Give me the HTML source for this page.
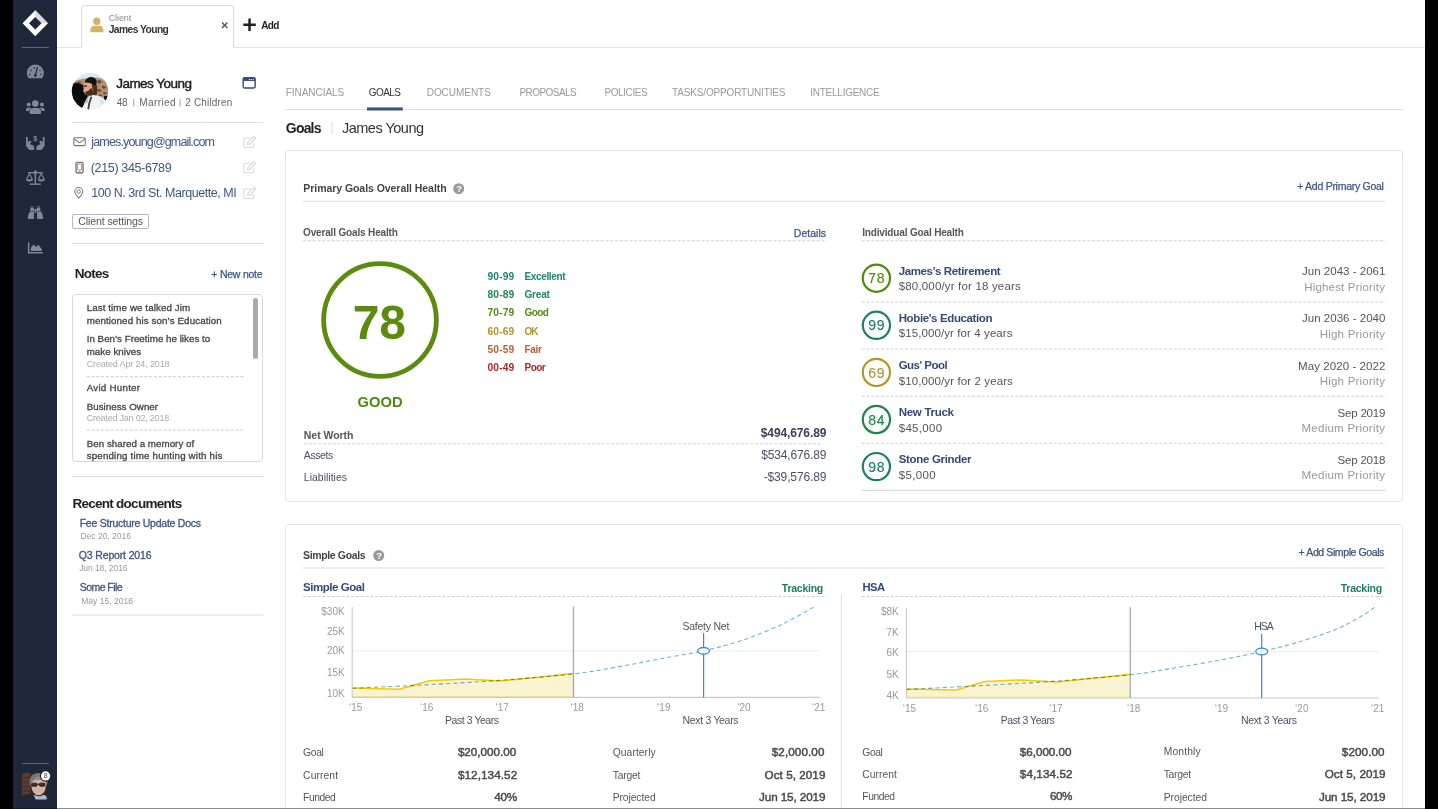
<!DOCTYPE html>
<html lang="en"><head><meta charset="utf-8"><title>Goals - James Young</title>
<style>
html,body{margin:0;padding:0;background:#fff;}
body{width:1438px;height:809px;overflow:hidden;font-family:"Liberation Sans",sans-serif;}
#app{position:relative;width:1438px;height:809px;overflow:hidden;background:#fff;}
.t{position:absolute;white-space:nowrap;line-height:1;font-family:"Liberation Sans",sans-serif;}
.b{position:absolute;box-sizing:border-box;}
svg{position:absolute;overflow:visible;}
svg text{font-family:"Liberation Sans",sans-serif;}

</style></head>
<body>
<div id="app">
<div class="b" style="left:0;top:0;width:13px;height:809px;background:#000"></div>
<div class="b" style="left:1425px;top:0;width:13px;height:809px;background:#000"></div>
<div class="b" style="left:13px;top:0;width:44px;height:809px;background:#1f283a"></div>
<div class="b" style="left:57px;top:47px;width:1368px;height:1px;background:#e3e3e3"></div>
<div class="b" style="left:81px;top:5px;width:153px;height:43px;background:#fff;border:1px solid #dcdcdc;border-bottom:none;border-radius:4px 4px 0 0"></div>
<div class="b" style="left:285px;top:150px;width:1118px;height:352px;border:1px solid #e4e4e4;border-radius:3px"></div>
<div class="b" style="left:285px;top:524px;width:1118px;height:300px;border:1px solid #e4e4e4;border-radius:3px"></div>
<div class="b" style="left:72px;top:294px;width:191px;height:168px;border:1px solid #dadada;border-radius:4px"></div>
<div class="b" style="left:253.3px;top:298.3px;width:4.5px;height:61px;background:#aaa;border-radius:2.5px"></div>
<div class="b" style="left:72px;top:213.5px;width:77px;height:15px;border:1px solid #b3b7cb;border-radius:2px"></div>
<svg width="1438" height="809" viewBox="0 0 1438 809" style="left:0;top:0">
<path d="M35.25 10.25 L47.95 23.25 L35.25 36.25 L22.55 23.25 Z" fill="#fff"/>
<path d="M35.25 10.25 L47.95 23.25 L41.55 23.25 L35.25 16.85 Z" fill="#d9dbe0"/>
<path d="M35.25 16.95 L41.5 23.25 L35.25 29.55 L29.0 23.25 Z" fill="#1f283a"/>
<rect x="22" y="47" width="27" height="1" fill="#5d6576"/>
<rect x="22" y="763" width="27" height="1" fill="#5d6576"/>
<path d="M28.400 78.200 A8.600 8.600 0 1 1 42.200 78.200 Z" fill="#7f8797"/>
<path d="M35.3 75.6 L37.3 67.6" stroke="#1f283a" stroke-width="1.3" stroke-linecap="round"/>
<circle cx="29.6" cy="74.6" r="0.75" fill="#1f283a"/>
<circle cx="30.9" cy="70.4" r="0.75" fill="#1f283a"/>
<circle cx="34.3" cy="67.9" r="0.75" fill="#1f283a"/>
<circle cx="40.0" cy="70.4" r="0.75" fill="#1f283a"/>
<circle cx="41.0" cy="74.6" r="0.75" fill="#1f283a"/>
<circle cx="35.3" cy="75.4" r="1.3" fill="#1f283a"/>
<circle cx="35.3" cy="103.6" r="3.3" fill="#7f8797"/>
<path d="M29.400 112.600 q0 -4.600 3.900 -4.600 h4 q3.900 0 3.900 4.600 q0 1.300 -1.300 1.300 h-9.200 q-1.300 0 -1.300 -1.300 z" fill="#7f8797"/>
<circle cx="28.7" cy="104.6" r="2" fill="#7f8797"/><circle cx="41.9" cy="104.6" r="2" fill="#7f8797"/>
<path d="M25.9 111 v-1 a2.3 2.3 0 0 1 2.3 -2.3 h1.8 a3 3 0 0 1 1.1 0.3 a5 5 0 0 0 -2.2 3 z" fill="#7f8797"/>
<path d="M44.7 111 v-1 a2.3 2.3 0 0 0 -2.3 -2.3 h-1.8 a3 3 0 0 0 -1.1 0.3 a5 5 0 0 1 2.2 3 z" fill="#7f8797"/>
<path d="M26 137.6 q0 -0.9 0.9 -0.9 q0.9 0 0.9 0.9 v4.6 l1.6 -1.2 q0.9 -0.6 1.6 0.1 q0.6 0.8 0 1.5 l-1.2 1.5 l3.3 1.3 q1 0.5 1 1.6 v2.9 h-4.9 l-2.6 -3.2 q-0.6 -0.8 -0.6 -1.8 z" fill="#7f8797"/>
<path d="M44.6 137.6 q0 -0.9 -0.9 -0.9 q-0.9 0 -0.9 0.9 v4.6 l-1.6 -1.2 q-0.9 -0.6 -1.6 0.1 q-0.6 0.8 0 1.5 l1.2 1.5 l-3.3 1.3 q-1 0.5 -1 1.6 v2.9 h4.9 l2.6 -3.2 q0.6 -0.8 0.6 -1.8 z" fill="#7f8797"/>
<rect x="34.6" y="170.8" width="1.5" height="13" fill="#7f8797"/>
<rect x="28" y="172" width="14.8" height="1.4" fill="#7f8797"/>
<rect x="29.8" y="183.5" width="11" height="1.4" fill="#7f8797"/>
<circle cx="35.35" cy="171.9" r="1.4" fill="#7f8797"/>
<path d="M29.4 173.6 L26.4 179.4 M29.4 173.6 L32.4 179.4" stroke="#7f8797" stroke-width="1.1" fill="none"/>
<path d="M25.9 179.2 h7 a3.5 2.2 0 0 1 -7 0 z" fill="#7f8797"/>
<path d="M41.3 173.6 L38.3 179.4 M41.3 173.6 L44.3 179.4" stroke="#7f8797" stroke-width="1.1" fill="none"/>
<path d="M37.8 179.2 h7 a3.5 2.2 0 0 1 -7 0 z" fill="#7f8797"/>
<path d="M30.3 208 h3.6 v3 h-3.6 z M36.7 208 h3.6 v3 h-3.6 z" fill="#7f8797"/>
<path d="M30.6 206.4 h3 v1.2 h-3 z M37 206.4 h3 v1.2 h-3 z" fill="#7f8797"/>
<path d="M30.1 211.4 h3.9 v6.6 q0 0.9 -0.9 0.9 h-4.5 q-0.9 0 -0.9 -0.9 q0.3 -4.2 2.3 -6.6 z" fill="#7f8797"/>
<path d="M40.9 211.4 h-3.9 v6.6 q0 0.9 0.9 0.9 h4.5 q0.9 0 0.9 -0.9 q-0.3 -4.2 -2.3 -6.6 z" fill="#7f8797"/>
<rect x="34.4" y="209" width="2.2" height="3.6" fill="#7f8797"/>
<path d="M28.6 242.6 v10.2 h14.3" stroke="#7f8797" stroke-width="1.5" fill="none"/>
<path d="M30.8 251 v-3.2 l2.7 -3.4 l2.6 2.6 l2.3 -2.2 l3.4 4.4 v1.8 z" fill="#7f8797"/>
<defs><clipPath id="cav2"><rect x="22" y="773" width="26.3" height="26.6" rx="2.5"/></clipPath><clipPath id="cav1"><circle cx="90" cy="91.3" r="18.2"/></clipPath></defs>
<g clip-path="url(#cav2)">
<rect x="22" y="773" width="27" height="27" fill="#33241f"/>
<rect x="22" y="773" width="8.500" height="23" fill="#5a3a2f"/>
<path d="M22 777.500 h8.500 M22 782 h8.500 M22 786.500 h8.500 M22 791 h8.500" stroke="#3c2620" stroke-width="0.700"/>
<path d="M29.500 783 q0 -10 9 -10 q9 0 9 10 l-1 3 h-16 z" fill="#77777a"/>
<ellipse cx="38.600" cy="786" rx="7.200" ry="9.300" fill="#d3b3a2"/>
<path d="M31.200 782 q2 -5 7.500 -5 q5.500 0 7.500 5 q-3 -2.500 -7.500 -2.300 q-4.500 0 -7.500 2.300 z" fill="#8b8a8c"/>
<rect x="31.600" y="783.200" width="5.400" height="3" rx="0.900" fill="#3a3030" stroke="#141010" stroke-width="0.800"/>
<rect x="39.400" y="783.200" width="5.400" height="3" rx="0.900" fill="#3a3030" stroke="#141010" stroke-width="0.800"/>
<path d="M37 784.200 h2.400" stroke="#141010" stroke-width="0.800"/>
<path d="M22 795.500 q6 -2.500 11 -1.500 l3.500 6 h-14.500 z" fill="#26262b"/>
<path d="M33.500 794.500 q5 3.500 10 0.300 l3.500 1.500 l1.500 4 h-12.500 z" fill="#a9bdd2"/>
<path d="M46 794 l3 1 v5 h-2 z" fill="#26262b"/>
</g>
<circle cx="45.6" cy="775.9" r="5.7" fill="#1f283a"/><circle cx="45.6" cy="775.9" r="4.6" fill="#fff"/>
<circle cx="96.8" cy="21.2" r="3.7" fill="#d5b26c"/>
<path d="M90.3 32.2 v-2.2 a4.3 4.3 0 0 1 4.3 -4.3 h4.5 a4.3 4.3 0 0 1 4.3 4.3 v2.2 z" fill="#d5b26c"/>
<path d="M222 22.6 l5.4 5.4 M227.4 22.6 l-5.4 5.4" stroke="#555" stroke-width="1.4" fill="none"/>
<path d="M243.300 24.700 h12.500 M249.550 18.450 v12.500" stroke="#222" stroke-width="2.500" fill="none"/>
<g clip-path="url(#cav1)">
<rect x="71" y="72" width="38" height="38" fill="#d6e9f4"/>
<path d="M72 84 q3 -4 8 -4.500 q5 -1.500 9 -0.500 q6 -2.500 12 -0.500 q5 1.500 7 6 q2 5 0 12 l-3 5 h-14 l-12 -10 z" fill="#b39173"/>
<path d="M97 80.500 q3 -1 5 1 q-1 2.500 -4 2 z M102 86 q3 -1 4.500 1.500 q-2 2 -4.500 0.500 z M98 89 q3 0 4 2 q-3 1.500 -5 0 z M103.500 92 q2.500 -0.500 3.500 1.500 q-2 1.500 -4 0.300 z M99.500 94 q2 0 3 1.500 q-2 1 -3.500 0 z M76 82.500 q3 -1.500 6 -0.500 q-2 2 -6 1.500 z M94 81 q1.500 -0.500 2.500 0.500 q-1 1 -2.500 0.500z" fill="#6a4b37"/>
<path d="M104 96 q3 -1 4.500 1 v4 q-3 0 -4.500 -2 z" fill="#16120f"/>
<path d="M70 84 q7 -2.500 13.500 1 l0.800 5 q0.500 4 3.500 6 q-2 5 -4.500 10 l-3 4 h-10.500 z" fill="#0b0b0b"/>
<path d="M90 83 q5 -1 7 3 q1 6 -1 10.500 l-5.500 1 z" fill="#4b3020"/>
<path d="M83.200 85 q0.500 -2 3 -2.200 l5.500 0.500 l1 7 l-2 4 l-4.500 0.800 q-1.500 -0.500 -1.800 -2.500 l-1.500 -1.600 l0.800 -1.500 z" fill="#dba988"/>
<path d="M83.400 85.300 h3.400 v1.600 h-3.200 z" fill="#7a2f1f"/>
<path d="M85.500 91.500 q2.500 0.500 4.500 -2.500 l1.500 -1 l1.500 4.500 q-1.500 3 -5.500 3.400 q-1.800 -0.400 -2.200 -2 z" fill="#4a2c1c"/>
<path d="M84.800 82.600 q0.500 -4.500 5.500 -5.500 q5 -0.300 6.300 4 q0.300 2.500 -0.600 4.300 l-3.500 -1.500 q-3.500 -1.500 -7.700 -1.300 z" fill="#121212"/>
<path d="M83 110 q0.500 -9 6 -13.500 l4 -1.500 q8 0.500 12 5 q3 4 3.500 10 z" fill="#eef3f6"/>
<path d="M90.500 96.500 q-2.500 6 -3.300 13.500 h1.800 q0.800 -7 3.300 -13 z" fill="#4a3d33"/>
<path d="M99 98 q5 1.500 8.500 12 h-6 q-0.500 -7 -2.500 -12 z" fill="#cfe2ef"/>
<path d="M84.500 104 q1.500 -5 4.500 -7.500 l-1.500 6 z" fill="#c9b9a6"/>
</g>
<rect x="243.15" y="77.650" width="12" height="10.400" rx="1.6" fill="none" stroke="#334a7c" stroke-width="1.400"/>
<rect x="243.15" y="77.650" width="12" height="3.300" fill="#334a7c"/>
<circle cx="249.400" cy="79.300" r="0.600" fill="#fff"/><circle cx="251.300" cy="79.300" r="0.600" fill="#fff"/><circle cx="253.200" cy="79.300" r="0.600" fill="#fff"/>
<rect x="133.300" y="99" width="1" height="7.600" fill="#a4a4a4"/><rect x="179.600" y="99" width="1" height="7.600" fill="#a4a4a4"/>
<rect x="72" y="122.0" width="191" height="1" fill="#dedede"/>
<rect x="72" y="243.0" width="191" height="1" fill="#dedede"/>
<rect x="72" y="476.0" width="191" height="1" fill="#dedede"/>
<rect x="72" y="614.5" width="191" height="1" fill="#dedede"/>
<rect x="73.850" y="137.750" width="11.400" height="7.900" rx="1.2" fill="none" stroke="#7a7a7a" stroke-width="1.1"/>
<path d="M74.200 139 l4.600 3.400 q0.750 0.500 1.500 0 l4.600 -3.400" fill="none" stroke="#7a7a7a" stroke-width="1.1"/>
<rect x="76" y="162.400" width="7.100" height="10.600" rx="1.500" fill="none" stroke="#7a7a7a" stroke-width="1.400"/>
<rect x="77.700" y="164" width="3.700" height="5.800" fill="none" stroke="#7a7a7a" stroke-width="0.7"/>
<rect x="78.400" y="171.100" width="2.300" height="0.9" fill="#7a7a7a"/>
<path d="M78.750 198.200 q-4 -4.700 -4 -6.600 a4 4 0 0 1 8 0 q0 1.900 -4 6.600 z" fill="none" stroke="#7a7a7a" stroke-width="1.050" stroke-linejoin="round"/>
<circle cx="78.750" cy="191.600" r="1.700" fill="none" stroke="#7a7a7a" stroke-width="1"/>
<path d="M250.5 138.0 h-5.300 a1.400 1.400 0 0 0 -1.400 1.400 v6.700 a1.400 1.400 0 0 0 1.400 1.400 h7.200 a1.400 1.400 0 0 0 1.400 -1.400 v-3.200" fill="none" stroke="#dadada" stroke-width="1.100"/>
<path d="M247.5 144.5 l0.500 -2.400 l5.700 -5.700 l1.900 1.900 l-5.700 5.700 z" fill="none" stroke="#dadada" stroke-width="1.250" stroke-linejoin="round"/>
<path d="M250.5 163.3 h-5.300 a1.400 1.400 0 0 0 -1.400 1.400 v6.700 a1.400 1.400 0 0 0 1.400 1.400 h7.200 a1.400 1.400 0 0 0 1.400 -1.400 v-3.200" fill="none" stroke="#dadada" stroke-width="1.100"/>
<path d="M247.5 169.8 l0.500 -2.400 l5.700 -5.700 l1.900 1.900 l-5.700 5.700 z" fill="none" stroke="#dadada" stroke-width="1.250" stroke-linejoin="round"/>
<path d="M250.5 189.0 h-5.300 a1.400 1.400 0 0 0 -1.400 1.400 v6.700 a1.400 1.400 0 0 0 1.400 1.400 h7.200 a1.400 1.400 0 0 0 1.400 -1.400 v-3.200" fill="none" stroke="#dadada" stroke-width="1.100"/>
<path d="M247.5 195.5 l0.500 -2.400 l5.700 -5.700 l1.900 1.900 l-5.700 5.700 z" fill="none" stroke="#dadada" stroke-width="1.250" stroke-linejoin="round"/>
<path d="M86.700 376.7 H244.200" stroke="#c9c9c9" stroke-width="1" stroke-dasharray="3 1.800"/>
<path d="M86.700 430 H244.200" stroke="#c9c9c9" stroke-width="1" stroke-dasharray="3 1.800"/>
<rect x="285.500" y="109" width="1117.500" height="1" fill="#dedede"/>
<rect x="367" y="107.400" width="35.800" height="3.100" fill="#3b5186"/>
<rect x="331.600" y="121.700" width="1" height="12.500" fill="#dcdcdc"/>
<circle cx="458.7" cy="188.7" r="5.500" fill="#9a9a9a"/>
<circle cx="378.7" cy="555.5" r="5.500" fill="#9a9a9a"/>
<path d="M303 201.200 H1385" stroke="#dcdcdc" stroke-width="1.100"/>
<path d="M303 240.800 H826.700 M861.700 240.800 H1385.600" stroke="#cfcfcf" stroke-width="1" stroke-dasharray="3 1.800"/>
<circle cx="380" cy="320" r="56.350" fill="none" stroke="#5b8c0f" stroke-width="4.800"/>
<path d="M303.800 443.800 H820.800" stroke="#cfcfcf" stroke-width="1" stroke-dasharray="3 1.800"/>
<circle cx="876.400" cy="278.20" r="13.600" fill="none" stroke="#4c8b0b" stroke-width="2.200"/>
<path d="M861.700 302.00 H1385.600" stroke="#cfcfcf" stroke-width="1" stroke-dasharray="3 1.800"/>
<circle cx="876.400" cy="325.30" r="13.600" fill="none" stroke="#1a7f6b" stroke-width="2.200"/>
<path d="M861.700 349.10 H1385.600" stroke="#cfcfcf" stroke-width="1" stroke-dasharray="3 1.800"/>
<circle cx="876.400" cy="372.40" r="13.600" fill="none" stroke="#b1962a" stroke-width="2.200"/>
<path d="M861.700 396.20 H1385.600" stroke="#cfcfcf" stroke-width="1" stroke-dasharray="3 1.800"/>
<circle cx="876.400" cy="419.50" r="13.600" fill="none" stroke="#1c8749" stroke-width="2.200"/>
<path d="M861.700 443.30 H1385.600" stroke="#cfcfcf" stroke-width="1" stroke-dasharray="3 1.800"/>
<circle cx="876.400" cy="466.60" r="13.600" fill="none" stroke="#1a7f6b" stroke-width="2.200"/>
<path d="M861.700 490.400 H1385.600" stroke="#dcdcdc" stroke-width="1.100"/>
<path d="M303 568 H1385" stroke="#dcdcdc" stroke-width="1.100"/>
<path d="M303 596.500 H827.200 M862 596.500 H1385" stroke="#cfcfcf" stroke-width="1" stroke-dasharray="3 1.800"/>
<path d="M841.400 594 V809" stroke="#dedede" stroke-width="1"/>
<path d="M352.2 650.8 H819.7" stroke="#ececec" stroke-width="1"/>
<path d="M352.50 688.00 L399.30 689.20 L429.50 680.70 L465.50 679.10 L500.50 681.00 L573.50 673.50 L573.5 697.4 L352.5 697.4 Z" fill="#f9f3cf"/>
<path d="M352.5 696.5 H573.5" stroke="#f4e89a" stroke-width="1"/>
<path d="M352.50 688.00 L399.30 689.20 L429.50 680.70 L465.50 679.10 L500.50 681.00 L573.50 673.50" fill="none" stroke="#f3c90a" stroke-width="1.500" stroke-linejoin="round"/>
<path d="M352.2 607 V697.4 H819.7" fill="none" stroke="#c9c9c9" stroke-width="1.100"/>
<path d="M573.5 606.5 V697.4" stroke="#aaaaaa" stroke-width="1.300"/>
<path d="M352.50 688.30 C365.42 687.68 405.42 685.93 430.00 684.60 C454.58 683.27 476.08 682.08 500.00 680.30 C523.92 678.52 553.42 676.22 573.50 673.90 C593.58 671.58 605.95 668.93 620.50 666.40 C635.05 663.87 646.95 661.32 660.80 658.70 C674.65 656.08 690.15 653.72 703.60 650.70 C717.05 647.68 728.47 644.98 741.50 640.60 C754.53 636.22 769.53 630.12 781.80 624.40 C794.07 618.68 809.55 609.32 815.10 606.30" fill="none" stroke="#6db3e0" stroke-width="1.100" stroke-dasharray="4.200 3" style="mix-blend-mode:multiply"/>
<path d="M703.6 633.1 V697.4" stroke="#2e8fd6" stroke-width="1.200"/>
<ellipse cx="703.6" cy="650.8" rx="5.900" ry="3.300" fill="#fff" fill-opacity="0.85" stroke="#2e8fd6" stroke-width="1.300"/>
<path d="M906.5 651.5 H1379.2" stroke="#ececec" stroke-width="1"/>
<path d="M906.80 689.00 L955.90 690.00 L985.10 681.50 L1021.40 679.90 L1057.70 681.90 L1130.30 674.30 L1130.3 698 L906.8 698 Z" fill="#f9f3cf"/>
<path d="M906.8 697.1 H1130.3" stroke="#f4e89a" stroke-width="1"/>
<path d="M906.80 689.00 L955.90 690.00 L985.10 681.50 L1021.40 679.90 L1057.70 681.90 L1130.30 674.30" fill="none" stroke="#f3c90a" stroke-width="1.500" stroke-linejoin="round"/>
<path d="M906.5 607.7 V698 H1379.2" fill="none" stroke="#c9c9c9" stroke-width="1.100"/>
<path d="M1130.3 607.2 V698" stroke="#aaaaaa" stroke-width="1.300"/>
<path d="M906.80 689.40 C919.83 688.73 959.97 686.80 985.00 685.40 C1010.03 684.00 1032.78 682.77 1057.00 681.00 C1081.22 679.23 1111.43 676.85 1130.30 674.80 C1149.17 672.75 1155.18 671.17 1170.20 668.70 C1185.22 666.23 1205.15 662.87 1220.40 660.00 C1235.65 657.13 1249.17 654.35 1261.70 651.50 C1274.23 648.65 1283.68 646.42 1295.60 642.90 C1307.52 639.38 1322.33 634.78 1333.20 630.40 C1344.07 626.02 1353.82 620.50 1360.80 616.60 C1367.78 612.70 1372.72 608.60 1375.10 607.00" fill="none" stroke="#6db3e0" stroke-width="1.100" stroke-dasharray="4.200 3" style="mix-blend-mode:multiply"/>
<path d="M1261.7 634.1 V698" stroke="#2e8fd6" stroke-width="1.200"/>
<ellipse cx="1261.7" cy="651.5" rx="5.900" ry="3.300" fill="#fff" fill-opacity="0.85" stroke="#2e8fd6" stroke-width="1.300"/>
<rect x="57" y="808" width="1368" height="1" fill="#8c8c8c"/>
<rect x="13" y="808" width="44" height="1" fill="#141a27"/>
</svg>
<div class="t" style="left:108.70px;top:14.20px;font-size:9px;color:#8c8c8c;letter-spacing:-0.102px;">Client</div>
<div class="t" style="left:108.70px;top:24.80px;font-size:10.25px;color:#333;font-weight:700;letter-spacing:-0.552px;">James Young</div>
<div class="t" style="left:261.20px;top:20.70px;font-size:10px;color:#222;font-weight:700;letter-spacing:-0.665px;">Add</div>
<div class="t" style="left:116.20px;top:76.80px;font-size:13.5px;color:#222;letter-spacing:-0.530px;-webkit-text-stroke:0.45px #222;">James Young</div>
<div class="t" style="left:116.70px;top:98.00px;font-size:10px;color:#666;letter-spacing:-0.262px;">48</div>
<div class="t" style="left:139.20px;top:98.00px;font-size:10px;color:#666;letter-spacing:0.411px;">Married</div>
<div class="t" style="left:185.30px;top:98.00px;font-size:10px;color:#666;letter-spacing:0.153px;">2 Children</div>
<div class="t" style="left:91.30px;top:136.20px;font-size:12.5px;color:#3d5584;letter-spacing:-0.845px;">james.young@gmail.com</div>
<div class="t" style="left:90.80px;top:161.70px;font-size:12.5px;color:#3d5584;letter-spacing:-0.356px;">(215) 345-6789</div>
<div class="t" style="left:91.20px;top:187.20px;font-size:12.5px;color:#3d5584;letter-spacing:-0.453px;">100 N. 3rd St. Marquette, MI</div>
<div class="t" style="left:78.30px;top:215.50px;font-size:10.5px;color:#555;letter-spacing:-0.086px;">Client settings</div>
<div class="t" style="left:74.70px;top:266.80px;font-size:13.5px;color:#222;font-weight:700;letter-spacing:-0.725px;">Notes</div>
<div class="t" style="left:211.30px;top:269.30px;font-size:10.5px;color:#3d5584;letter-spacing:-0.230px;-webkit-text-stroke:0.25px #3d5584;">+ New note</div>
<div class="t" style="left:86.70px;top:303.20px;font-size:9.75px;color:#444;letter-spacing:0.095px;-webkit-text-stroke:0.3px #444;">Last time we talked Jim</div>
<div class="t" style="left:86.70px;top:315.70px;font-size:9.75px;color:#444;letter-spacing:0.105px;-webkit-text-stroke:0.3px #444;">mentioned his son’s Education</div>
<div class="t" style="left:86.70px;top:334.20px;font-size:9.75px;color:#444;letter-spacing:0.024px;-webkit-text-stroke:0.3px #444;">In Ben’s Freetime he likes to</div>
<div class="t" style="left:86.70px;top:346.50px;font-size:9.75px;color:#444;letter-spacing:0.029px;-webkit-text-stroke:0.3px #444;">make knives</div>
<div class="t" style="left:86.70px;top:360.30px;font-size:9px;color:#aaa;letter-spacing:-0.145px;">Created Apr 24, 2018</div>
<div class="t" style="left:86.70px;top:383.20px;font-size:9.75px;color:#444;letter-spacing:0.258px;-webkit-text-stroke:0.3px #444;">Avid Hunter</div>
<div class="t" style="left:86.70px;top:401.50px;font-size:9.75px;color:#444;letter-spacing:0.028px;-webkit-text-stroke:0.3px #444;">Business Owner</div>
<div class="t" style="left:86.70px;top:413.80px;font-size:9px;color:#aaa;letter-spacing:-0.214px;">Created Jan 02, 2018</div>
<div class="t" style="left:86.70px;top:438.70px;font-size:9.75px;color:#444;letter-spacing:0.036px;-webkit-text-stroke:0.3px #444;">Ben shared a memory of</div>
<div class="t" style="left:86.70px;top:450.70px;font-size:9.75px;color:#444;letter-spacing:0.174px;-webkit-text-stroke:0.3px #444;">spending time hunting with his</div>
<div class="t" style="left:72.50px;top:496.50px;font-size:13.5px;color:#222;font-weight:700;letter-spacing:-0.738px;">Recent documents</div>
<div class="t" style="left:79.70px;top:517.70px;font-size:10.5px;color:#3d5584;letter-spacing:-0.245px;-webkit-text-stroke:0.3px #3d5584;">Fee Structure Update Docs</div>
<div class="t" style="left:80.50px;top:532.20px;font-size:8.5px;color:#999;letter-spacing:-0.012px;">Dec 20, 2016</div>
<div class="t" style="left:78.80px;top:549.70px;font-size:10.5px;color:#3d5584;letter-spacing:-0.152px;-webkit-text-stroke:0.3px #3d5584;">Q3 Report 2016</div>
<div class="t" style="left:79.20px;top:564.30px;font-size:8.5px;color:#999;letter-spacing:-0.075px;">Jun 18, 2016</div>
<div class="t" style="left:79.70px;top:582.20px;font-size:10.5px;color:#3d5584;letter-spacing:-0.541px;-webkit-text-stroke:0.3px #3d5584;">Some File</div>
<div class="t" style="left:81.20px;top:596.70px;font-size:8.5px;color:#999;letter-spacing:0.029px;">May 15, 2016</div>
<div class="t" style="left:285.80px;top:87.80px;font-size:10px;color:#999;letter-spacing:-0.059px;">FINANCIALS</div>
<div class="t" style="left:368.80px;top:87.80px;font-size:10px;color:#333;letter-spacing:-0.572px;">GOALS</div>
<div class="t" style="left:426.70px;top:87.80px;font-size:10px;color:#999;letter-spacing:-0.034px;">DOCUMENTS</div>
<div class="t" style="left:519.50px;top:87.80px;font-size:10px;color:#999;letter-spacing:-0.565px;">PROPOSALS</div>
<div class="t" style="left:604.50px;top:87.80px;font-size:10px;color:#999;letter-spacing:-0.423px;">POLICIES</div>
<div class="t" style="left:672.00px;top:87.80px;font-size:10px;color:#999;letter-spacing:-0.158px;">TASKS/OPPORTUNITIES</div>
<div class="t" style="left:810.30px;top:87.80px;font-size:10px;color:#999;letter-spacing:-0.261px;">INTELLIGENCE</div>
<div class="t" style="left:285.80px;top:121.00px;font-size:14px;color:#222;font-weight:700;letter-spacing:-0.804px;">Goals</div>
<div class="t" style="left:342.00px;top:121.00px;font-size:14.5px;color:#333;letter-spacing:-0.507px;">James Young</div>
<div class="t" style="left:303.30px;top:183.00px;font-size:10.5px;color:#444;font-weight:700;letter-spacing:-0.053px;">Primary Goals Overall Health</div>
<div class="t" style="left:1297.20px;top:181.00px;font-size:10.5px;color:#3d5584;letter-spacing:-0.269px;-webkit-text-stroke:0.25px #3d5584;">+ Add Primary Goal</div>
<div class="t" style="left:303.00px;top:227.80px;font-size:10px;color:#555;font-weight:700;letter-spacing:-0.153px;">Overall Goals Health</div>
<div class="t" style="left:793.80px;top:227.70px;font-size:10.5px;color:#3d5584;letter-spacing:0.026px;-webkit-text-stroke:0.25px #3d5584;">Details</div>
<div class="t" style="left:862.20px;top:227.80px;font-size:10px;color:#555;font-weight:700;letter-spacing:-0.157px;">Individual Goal Health</div>
<div class="t" style="left:352.70px;top:298.70px;font-size:48px;color:#5b8c0f;font-weight:700;letter-spacing:-0.095px;">78</div>
<div class="t" style="left:357.50px;top:394.70px;font-size:14.7px;color:#4c8b0b;font-weight:700;letter-spacing:0.076px;">GOOD</div>
<div class="t" style="left:487.40px;top:271.70px;font-size:10.25px;color:#1c8673;font-weight:700;letter-spacing:0.171px;">90-99</div>
<div class="t" style="left:524.50px;top:271.70px;font-size:10px;color:#1c8673;font-weight:700;letter-spacing:-0.360px;">Excellent</div>
<div class="t" style="left:487.40px;top:290.00px;font-size:10.25px;color:#1e8a55;font-weight:700;letter-spacing:0.171px;">80-89</div>
<div class="t" style="left:524.50px;top:290.00px;font-size:10px;color:#1e8a55;font-weight:700;letter-spacing:-0.198px;">Great</div>
<div class="t" style="left:487.40px;top:308.30px;font-size:10.25px;color:#55891c;font-weight:700;letter-spacing:0.171px;">70-79</div>
<div class="t" style="left:524.50px;top:308.30px;font-size:10px;color:#55891c;font-weight:700;letter-spacing:-0.598px;">Good</div>
<div class="t" style="left:487.40px;top:326.50px;font-size:10.25px;color:#b3932a;font-weight:700;letter-spacing:0.171px;">60-69</div>
<div class="t" style="left:524.50px;top:326.50px;font-size:10px;color:#b3932a;font-weight:700;letter-spacing:-1.078px;">OK</div>
<div class="t" style="left:487.40px;top:344.80px;font-size:10.25px;color:#bd5f2a;font-weight:700;letter-spacing:0.171px;">50-59</div>
<div class="t" style="left:524.50px;top:344.80px;font-size:10px;color:#bd5f2a;font-weight:700;letter-spacing:-0.316px;">Fair</div>
<div class="t" style="left:487.40px;top:363.20px;font-size:10.25px;color:#b3242a;font-weight:700;letter-spacing:0.171px;">00-49</div>
<div class="t" style="left:524.50px;top:363.20px;font-size:10px;color:#b3242a;font-weight:700;letter-spacing:-0.529px;">Poor</div>
<div class="t" style="left:303.80px;top:429.70px;font-size:10.5px;color:#555;font-weight:700;letter-spacing:-0.044px;">Net Worth</div>
<div class="t" style="left:760.80px;top:427.00px;font-size:12px;color:#3a3f55;font-weight:700;letter-spacing:-0.116px;">$494,676.89</div>
<div class="t" style="left:303.80px;top:450.20px;font-size:10.5px;color:#4a5068;letter-spacing:-0.412px;">Assets</div>
<div class="t" style="left:761.30px;top:449.20px;font-size:12px;color:#4a5068;letter-spacing:-0.166px;">$534,676.89</div>
<div class="t" style="left:303.80px;top:472.20px;font-size:10.5px;color:#4a5068;">Liabilities</div>
<div class="t" style="left:763.70px;top:471.20px;font-size:12px;color:#4a5068;letter-spacing:-0.138px;">-$39,576.89</div>
<div class="t" style="left:868.30px;top:271.30px;font-size:14px;color:#4c8b0b;letter-spacing:0.614px;-webkit-text-stroke:0.15px #4c8b0b;">78</div>
<div class="t" style="left:898.70px;top:266.00px;font-size:11.5px;color:#34497a;font-weight:700;letter-spacing:-0.369px;">James&#x27;s Retirement</div>
<div class="t" style="left:898.70px;top:281.30px;font-size:11.5px;color:#555;letter-spacing:0.172px;">$80,000/yr for 18 years</div>
<div class="t" style="left:1302.00px;top:266.30px;font-size:11.5px;color:#555;letter-spacing:0.020px;">Jun 2043 - 2061</div>
<div class="t" style="left:1304.20px;top:281.60px;font-size:11.5px;color:#999;letter-spacing:0.185px;">Highest Priority</div>
<div class="t" style="left:868.30px;top:318.40px;font-size:14px;color:#1a7f6b;letter-spacing:0.614px;-webkit-text-stroke:0.15px #1a7f6b;">99</div>
<div class="t" style="left:898.70px;top:313.10px;font-size:11.5px;color:#34497a;font-weight:700;letter-spacing:-0.377px;">Hobie&#x27;s Education</div>
<div class="t" style="left:898.70px;top:328.40px;font-size:11.5px;color:#555;letter-spacing:0.094px;">$15,000/yr for 4 years</div>
<div class="t" style="left:1302.00px;top:313.40px;font-size:11.5px;color:#555;letter-spacing:0.020px;">Jun 2036 - 2040</div>
<div class="t" style="left:1319.70px;top:328.70px;font-size:11.5px;color:#999;letter-spacing:0.219px;">High Priority</div>
<div class="t" style="left:868.30px;top:365.50px;font-size:14px;color:#b1962a;letter-spacing:0.614px;-webkit-text-stroke:0.15px #b1962a;">69</div>
<div class="t" style="left:898.70px;top:360.20px;font-size:11.5px;color:#34497a;font-weight:700;letter-spacing:-0.527px;">Gus&#x27; Pool</div>
<div class="t" style="left:898.70px;top:375.50px;font-size:11.5px;color:#555;letter-spacing:0.109px;">$10,000/yr for 2 years</div>
<div class="t" style="left:1298.00px;top:360.50px;font-size:11.5px;color:#555;letter-spacing:0.078px;">May 2020 - 2022</div>
<div class="t" style="left:1319.70px;top:375.80px;font-size:11.5px;color:#999;letter-spacing:0.219px;">High Priority</div>
<div class="t" style="left:868.30px;top:412.60px;font-size:14px;color:#1c8749;letter-spacing:0.614px;-webkit-text-stroke:0.15px #1c8749;">84</div>
<div class="t" style="left:898.70px;top:407.30px;font-size:11.5px;color:#34497a;font-weight:700;letter-spacing:-0.278px;">New Truck</div>
<div class="t" style="left:898.70px;top:422.60px;font-size:11.5px;color:#555;letter-spacing:0.321px;">$45,000</div>
<div class="t" style="left:1337.50px;top:407.60px;font-size:11.5px;color:#555;letter-spacing:-0.192px;">Sep 2019</div>
<div class="t" style="left:1301.50px;top:422.90px;font-size:11.5px;color:#999;letter-spacing:0.255px;">Medium Priority</div>
<div class="t" style="left:868.30px;top:459.70px;font-size:14px;color:#1a7f6b;letter-spacing:0.614px;-webkit-text-stroke:0.15px #1a7f6b;">98</div>
<div class="t" style="left:898.70px;top:454.40px;font-size:11.5px;color:#34497a;font-weight:700;letter-spacing:-0.325px;">Stone Grinder</div>
<div class="t" style="left:898.70px;top:469.70px;font-size:11.5px;color:#555;letter-spacing:0.344px;">$5,000</div>
<div class="t" style="left:1337.50px;top:454.70px;font-size:11.5px;color:#555;letter-spacing:-0.192px;">Sep 2018</div>
<div class="t" style="left:1301.50px;top:470.00px;font-size:11.5px;color:#999;letter-spacing:0.255px;">Medium Priority</div>
<div class="t" style="left:303.00px;top:550.20px;font-size:10.5px;color:#444;font-weight:700;letter-spacing:-0.353px;">Simple Goals</div>
<div class="t" style="left:1298.60px;top:547.30px;font-size:10.5px;color:#3d5584;letter-spacing:-0.396px;-webkit-text-stroke:0.25px #3d5584;">+ Add Simple Goals</div>
<div class="t" style="left:303.00px;top:582.30px;font-size:11.5px;color:#34497a;font-weight:700;letter-spacing:-0.457px;">Simple Goal</div>
<div class="t" style="left:781.80px;top:583.20px;font-size:10.5px;color:#1a7f5e;font-weight:700;letter-spacing:-0.253px;">Tracking</div>
<div class="t" style="left:862.50px;top:582.20px;font-size:11.25px;color:#34497a;font-weight:700;letter-spacing:-0.614px;">HSA</div>
<div class="t" style="left:1340.80px;top:583.00px;font-size:10.5px;color:#1a7f5e;font-weight:700;letter-spacing:-0.267px;">Tracking</div>
<div class="t" style="left:445.00px;top:714.50px;font-size:10.5px;color:#555;letter-spacing:-0.445px;">Past 3 Years</div>
<div class="t" style="left:682.60px;top:714.70px;font-size:10.5px;color:#555;letter-spacing:-0.325px;">Next 3 Years</div>
<div class="t" style="left:682.40px;top:620.90px;font-size:10.5px;color:#555;letter-spacing:-0.234px;">Safety Net</div>
<div class="t" style="left:1000.80px;top:715.30px;font-size:10.5px;color:#4a5068;letter-spacing:-0.455px;">Past 3 Years</div>
<div class="t" style="left:1240.90px;top:715.40px;font-size:10.5px;color:#4a5068;letter-spacing:-0.316px;">Next 3 Years</div>
<div class="t" style="left:1254.20px;top:621.40px;font-size:10.5px;color:#4a5068;letter-spacing:-0.993px;">HSA</div>
<div class="t" style="left:303.10px;top:747.90px;font-size:10.3px;color:#555;letter-spacing:-0.321px;">Goal</div>
<div class="t" style="left:303.10px;top:770.70px;font-size:10.3px;color:#555;letter-spacing:0.104px;">Current</div>
<div class="t" style="left:303.10px;top:792.50px;font-size:10.3px;color:#555;letter-spacing:-0.459px;">Funded</div>
<div class="t" style="left:457.90px;top:745.90px;font-size:11.7px;color:#484848;letter-spacing:-0.022px;-webkit-text-stroke:0.45px #484848;">$20,000.00</div>
<div class="t" style="left:457.90px;top:768.70px;font-size:11.7px;color:#484848;letter-spacing:0.089px;-webkit-text-stroke:0.45px #484848;">$12,134.52</div>
<div class="t" style="left:494.30px;top:790.50px;font-size:11.7px;color:#484848;letter-spacing:-0.300px;-webkit-text-stroke:0.45px #484848;">40%</div>
<div class="t" style="left:612.70px;top:747.90px;font-size:10.3px;color:#555;letter-spacing:0.076px;">Quarterly</div>
<div class="t" style="left:612.70px;top:770.70px;font-size:10.3px;color:#555;letter-spacing:-0.191px;">Target</div>
<div class="t" style="left:612.70px;top:792.50px;font-size:10.3px;color:#555;letter-spacing:-0.072px;">Projected</div>
<div class="t" style="left:771.80px;top:745.90px;font-size:11.7px;color:#484848;letter-spacing:0.076px;-webkit-text-stroke:0.45px #484848;">$2,000.00</div>
<div class="t" style="left:764.60px;top:768.70px;font-size:11.7px;color:#484848;letter-spacing:0.038px;-webkit-text-stroke:0.45px #484848;">Oct 5, 2019</div>
<div class="t" style="left:759.10px;top:790.50px;font-size:11.7px;color:#484848;letter-spacing:-0.117px;-webkit-text-stroke:0.45px #484848;">Jun 15, 2019</div>
<div class="t" style="left:862.30px;top:747.90px;font-size:10.3px;color:#555;letter-spacing:-0.421px;">Goal</div>
<div class="t" style="left:862.30px;top:769.70px;font-size:10.3px;color:#555;letter-spacing:0.054px;">Current</div>
<div class="t" style="left:862.30px;top:792.10px;font-size:10.3px;color:#555;letter-spacing:-0.459px;">Funded</div>
<div class="t" style="left:1019.80px;top:745.90px;font-size:11.7px;color:#484848;letter-spacing:-0.037px;-webkit-text-stroke:0.45px #484848;">$6,000.00</div>
<div class="t" style="left:1019.80px;top:767.70px;font-size:11.7px;color:#484848;letter-spacing:0.088px;-webkit-text-stroke:0.45px #484848;">$4,134.52</div>
<div class="t" style="left:1050.00px;top:790.10px;font-size:11.7px;color:#484848;letter-spacing:-0.500px;-webkit-text-stroke:0.45px #484848;">60%</div>
<div class="t" style="left:1163.70px;top:747.30px;font-size:10.3px;color:#555;letter-spacing:0.149px;">Monthly</div>
<div class="t" style="left:1163.70px;top:770.30px;font-size:10.3px;color:#555;letter-spacing:-0.231px;">Target</div>
<div class="t" style="left:1163.70px;top:792.50px;font-size:10.3px;color:#555;letter-spacing:-0.022px;">Projected</div>
<div class="t" style="left:1341.80px;top:745.90px;font-size:11.7px;color:#484848;letter-spacing:0.092px;-webkit-text-stroke:0.45px #484848;">$200.00</div>
<div class="t" style="left:1324.70px;top:768.30px;font-size:11.7px;color:#484848;letter-spacing:0.048px;-webkit-text-stroke:0.45px #484848;">Oct 5, 2019</div>
<div class="t" style="left:1318.90px;top:790.50px;font-size:11.7px;color:#484848;letter-spacing:-0.080px;-webkit-text-stroke:0.45px #484848;">Jun 15, 2019</div>
<div class="t" style="left:321.32px;top:606.50px;font-size:10px;color:#999;">$30K</div>
<div class="t" style="left:326.88px;top:626.50px;font-size:10px;color:#999;">25K</div>
<div class="t" style="left:326.88px;top:646.40px;font-size:10px;color:#999;">20K</div>
<div class="t" style="left:326.88px;top:667.80px;font-size:10px;color:#999;">15K</div>
<div class="t" style="left:326.88px;top:689.20px;font-size:10px;color:#999;">10K</div>
<div class="t" style="left:880.88px;top:607.40px;font-size:10px;color:#999;">$8K</div>
<div class="t" style="left:886.44px;top:627.50px;font-size:10px;color:#999;">7K</div>
<div class="t" style="left:886.44px;top:647.70px;font-size:10px;color:#999;">6K</div>
<div class="t" style="left:886.44px;top:669.50px;font-size:10px;color:#999;">5K</div>
<div class="t" style="left:886.44px;top:690.50px;font-size:10px;color:#999;">4K</div>
<div class="t" style="left:348.92px;top:703.20px;font-size:10px;color:#999;">‘15</div>
<div class="t" style="left:419.92px;top:703.20px;font-size:10px;color:#999;">‘16</div>
<div class="t" style="left:495.52px;top:703.20px;font-size:10px;color:#999;">‘17</div>
<div class="t" style="left:570.42px;top:703.20px;font-size:10px;color:#999;">‘18</div>
<div class="t" style="left:657.12px;top:703.20px;font-size:10px;color:#999;">‘19</div>
<div class="t" style="left:737.22px;top:703.20px;font-size:10px;color:#999;">‘20</div>
<div class="t" style="left:812.02px;top:703.20px;font-size:10px;color:#999;">‘21</div>
<div class="t" style="left:902.72px;top:703.90px;font-size:10px;color:#999;">‘15</div>
<div class="t" style="left:974.92px;top:703.90px;font-size:10px;color:#999;">‘16</div>
<div class="t" style="left:1049.22px;top:703.90px;font-size:10px;color:#999;">‘17</div>
<div class="t" style="left:1127.02px;top:703.90px;font-size:10px;color:#999;">‘18</div>
<div class="t" style="left:1214.82px;top:703.90px;font-size:10px;color:#999;">‘19</div>
<div class="t" style="left:1295.12px;top:703.90px;font-size:10px;color:#999;">‘20</div>
<div class="t" style="left:1370.92px;top:703.90px;font-size:10px;color:#999;">‘21</div>
<div class="t" style="left:33.30px;top:135.40px;font-size:7.5px;color:#7f8797;font-weight:700;">$</div>
<div class="t" style="left:43.85px;top:772.40px;font-size:7px;color:#444;">8</div>
<div class="t" style="left:456.30px;top:184.10px;font-size:9.5px;color:#fff;font-weight:700;">?</div>
<div class="t" style="left:376.30px;top:550.90px;font-size:9.5px;color:#fff;font-weight:700;">?</div>
</div>
</body></html>
